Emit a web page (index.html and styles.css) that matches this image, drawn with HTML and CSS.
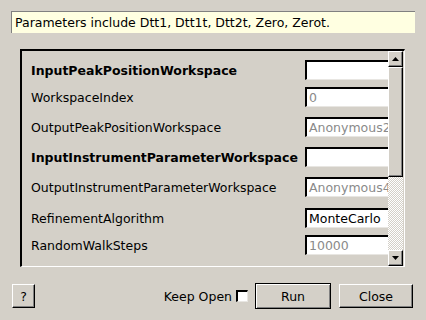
FILE: index.html
```html
<!DOCTYPE html>
<html>
<head>
<meta charset="utf-8">
<link rel="stylesheet" href="styles.css">
</head>
<body>
<div class="dialog">
  <div class="tip">Parameters include Dtt1, Dtt1t, Dtt2t, Zero, Zerot.</div>
  <div class="frame">
    <div class="viewport">
      <div class="row r1"><span class="label bold">InputPeakPositionWorkspace</span><span class="field"></span></div>
      <div class="row r2"><span class="label">WorkspaceIndex</span><span class="field grey">0</span></div>
      <div class="row r3"><span class="label">OutputPeakPositionWorkspace</span><span class="field grey">Anonymous2</span></div>
      <div class="row r3"><span class="label bold">InputInstrumentParameterWorkspace</span><span class="field"></span></div>
      <div class="row r3"><span class="label">OutputInstrumentParameterWorkspace</span><span class="field grey">Anonymous4</span></div>
      <div class="row r6"><span class="label">RefinementAlgorithm</span><span class="field">MonteCarlo</span></div>
      <div class="row r2"><span class="label">RandomWalkSteps</span><span class="field grey">10000</span></div>
    </div>
    <div class="scrollbar">
      <div class="sbtn"><svg width="7" height="4" viewBox="0 0 7 4"><path d="M3.5 0 L7 4 L0 4 Z" fill="#000"/></svg></div>
      <div class="slider"></div>
      <div class="track"></div>
      <div class="sbtn"><svg width="7" height="4" viewBox="0 0 7 4"><path d="M0 0 L7 0 L3.5 4 Z" fill="#000"/></svg></div>
    </div>
  </div>
  <div class="footer">
    <button class="btn help">?</button>
    <div class="spacer"></div>
    <label class="keep">Keep Open <span class="check"></span></label>
    <button class="btn run">Run</button>
    <button class="btn close">Close</button>
  </div>
</div>
</body>
</html>
```
FILE: styles.css
```css
html, body {
  margin: 0;
  padding: 0;
  background: #d4d0c8;
  width: 426px;
  height: 320px;
  overflow: hidden;
  font-family: "DejaVu Sans", sans-serif;
  font-size: 12.5px;
  color: #000;
}
.dialog {
  padding: 11px 11px 0 11px;
}
.tip {
  box-sizing: border-box;
  width: 404px;
  height: 22px;
  background: #ffffe1;
  border-top: 1px solid #808080;
  border-left: 1px solid #808080;
  padding: 3px 0 0 3px;
  line-height: 16px;
  white-space: nowrap;
}
.frame {
  box-sizing: border-box;
  margin: 16px 0 0 9px;
  width: 385px;
  height: 218px;
  border-top: 2px solid #000;
  border-left: 2px solid #000;
  border-right: 1px solid #fff;
  border-bottom: 1px solid #fff;
  box-shadow: inset -1px -1px 0 #d4d0c8;
  display: flex;
  overflow: hidden;
}
.viewport {
  flex: 1;
  overflow: hidden;
  padding: 9px 0 0 9px;
}
.row {
  display: flex;
  align-items: center;
  height: 20px;
  white-space: nowrap;
}
.r2 { margin-top: 7px; }
.r3 { margin-top: 10px; }
.r6 { margin-top: 11px; }
.label {
  width: 274px;
  flex: none;
}
.bold { font-weight: bold; }
.field {
  box-sizing: border-box;
  flex: none;
  width: 100px;
  height: 20px;
  background: #fff;
  border-top: 2px solid #000;
  border-left: 2px solid #000;
  border-right: 1px solid #d4d0c8;
  border-bottom: 1px solid #e8e6e2;
  padding: 0 0 0 2px;
  line-height: 17px;
  overflow: hidden;
}
.grey { color: #8a8a8a; }
.scrollbar {
  width: 15px;
  flex: none;
  display: flex;
  flex-direction: column;
  margin-right: 1px;
}
.sbtn, .slider {
  box-sizing: border-box;
  background: #d4d0c8;
  border-top: 1px solid #fff;
  border-left: 1px solid #fff;
  border-right: 1px solid #000;
  border-bottom: 1px solid #000;
  box-shadow: inset -1px -1px 0 #808080;
}
.sbtn {
  height: 16px;
  display: flex;
  align-items: center;
  justify-content: center;
  flex: none;
}
.slider {
  height: 110px;
  flex: none;
}
.track {
  flex: 1;
  background: repeating-conic-gradient(#ffffff 0 25%, #d4d0c8 0 50%) 0 0 / 2px 2px;
}
.footer {
  display: flex;
  align-items: center;
  margin-top: 16px;
  padding-left: 1px;
  padding-right: 2px;
}
.spacer { flex: 1; }
.btn {
  box-sizing: border-box;
  font-family: "DejaVu Sans", sans-serif;
  font-size: 12.5px;
  background: #d4d0c8;
  color: #000;
  border-top: 1px solid #fff;
  border-left: 1px solid #fff;
  border-right: 1px solid #000;
  border-bottom: 1px solid #000;
  box-shadow: inset -1px -1px 0 #808080;
  padding: 0;
  height: 24px;
}
.help { width: 23px; }
.keep {
  display: flex;
  align-items: center;
  gap: 4px;
  margin-right: 7px;
}
.check {
  box-sizing: border-box;
  width: 12px;
  height: 12px;
  background: #fff;
  border-top: 2px solid #000;
  border-left: 2px solid #000;
  border-right: 1px solid #e8e6e2;
  border-bottom: 1px solid #e8e6e2;
}
.run {
  width: 76px;
  height: 26px;
  border: 1px solid #000;
  box-shadow: inset 1px 1px 0 #fff, inset -1px -1px 0 #808080;
  margin-right: 8px;
}
.close { width: 74px; }
```
